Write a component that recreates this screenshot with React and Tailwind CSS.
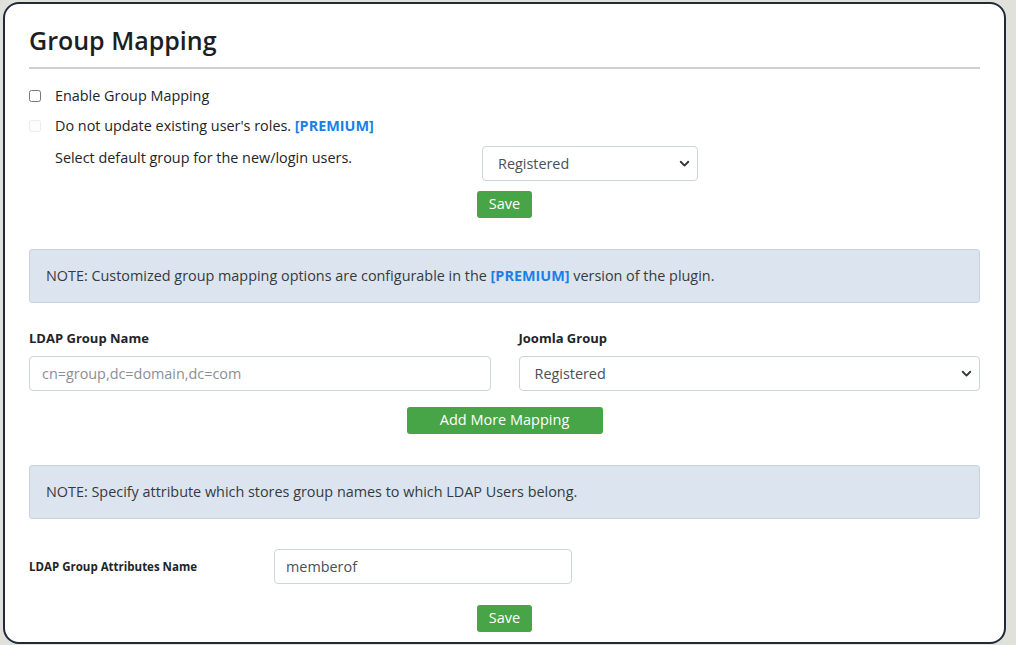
import { useState } from 'react'

function Chevron() {
  return (
    <svg width="11" height="11" viewBox="0 0 16 16" className="shrink-0">
      <path d="M2.5 5.5l5.5 5.5 5.5-5.5" fill="none" stroke="#343a40" strokeWidth="2.8" strokeLinecap="round" strokeLinejoin="round" />
    </svg>
  )
}

function FakeSelect({ value, className = '' }) {
  return (
    <div className={`flex items-center justify-between h-[35px] pl-[15px] pr-[7px] border border-[#ced4da] rounded-[4px] bg-white text-[#495057] ${className}`}>
      <span>{value}</span>
      <Chevron />
    </div>
  )
}

function SaveButton({ children = 'Save', className = '' }) {
  return (
    <button className={`h-[27px] rounded-[3px] bg-[#47a447] text-white text-[14.5px] leading-none ${className}`}>
      {children}
    </button>
  )
}

export default function App() {
  const [enabled, setEnabled] = useState(false)

  return (
    <div className="w-[1016px] h-[645px] bg-[#e1e1dc] pt-[2px] pl-[3px] overflow-hidden" style={{ fontFamily: '"Open Sans", "Noto Sans", sans-serif' }}>
      <div className="w-[1003px] h-[642px] bg-white border-2 border-[#1f2b3a] rounded-[16px] px-[24px] pt-[19px] text-[14.4px] text-[#212529]">
        <h1 className="text-[25px] leading-[34px] font-semibold text-[#1b1e22]">Group Mapping</h1>
        <hr className="mt-[10px] border-t-2 border-[#cfcfcf]" />

        <div className="mt-[18px] flex items-center h-[18px]">
          <input
            type="checkbox"
            checked={enabled}
            onChange={(e) => setEnabled(e.target.checked)}
            className="w-[12px] h-[12px] m-0"
          />
          <span className="ml-[14px]">Enable Group Mapping</span>
        </div>
        <div className="mt-[12px] flex items-center h-[18px]">
          <input type="checkbox" disabled className="w-[12px] h-[12px] m-0 opacity-40" />
          <span className="ml-[14px]">
            Do not update existing user's roles.{' '}
            <span className="font-bold text-[#1c7fe6]">[PREMIUM]</span>
          </span>
        </div>

        <div className="mt-[11px] flex">
          <div className="w-[453px] pl-[26px] pt-[1px]">Select default group for the new/login users.</div>
          <FakeSelect value="Registered" className="w-[216px] h-[35px]" />
        </div>
        <div className="mt-[10px] flex justify-center">
          <SaveButton className="w-[55px]" />
        </div>

        <div className="mt-[31px] h-[54px] flex items-center px-[16px] bg-[#dce5ef] border border-[#c6d3df] rounded-[3px] text-[#343a40]">
          <span>
            NOTE: Customized group mapping options are configurable in the{' '}
            <span className="font-bold text-[#1c7fe6]">[PREMIUM]</span> version of the plugin.
          </span>
        </div>

        <div className="mt-[26px] grid grid-cols-2 gap-x-[28px]">
          <div>
            <div className="text-[13px] font-bold leading-[18px]">LDAP Group Name</div>
            <input
              type="text"
              placeholder="cn=group,dc=domain,dc=com"
              className="mt-[9px] w-full h-[35px] px-[12px] border border-[#ced4da] rounded-[4px] text-[14.4px] placeholder:text-[#8a8f94] outline-none"
            />
          </div>
          <div>
            <div className="text-[13px] font-bold leading-[18px]">Joomla Group</div>
            <FakeSelect value="Registered" className="mt-[9px] w-full" />
          </div>
        </div>
        <div className="mt-[16px] flex justify-center">
          <SaveButton className="w-[196px]">Add More Mapping</SaveButton>
        </div>

        <div className="mt-[31px] h-[54px] flex items-center px-[16px] bg-[#dce5ef] border border-[#c6d3df] rounded-[3px] text-[#343a40]">
          NOTE: Specify attribute which stores group names to which LDAP Users belong.
        </div>

        <div className="mt-[30px] flex items-center">
          <div className="w-[245px] text-[11.5px] font-bold">LDAP Group Attributes Name</div>
          <input
            type="text"
            defaultValue="memberof"
            className="w-[298px] h-[35px] px-[11px] border border-[#ced4da] rounded-[4px] text-[14.4px] text-[#495057] outline-none"
          />
        </div>
        <div className="mt-[21px] flex justify-center">
          <SaveButton className="w-[55px]" />
        </div>
      </div>
    </div>
  )
}
